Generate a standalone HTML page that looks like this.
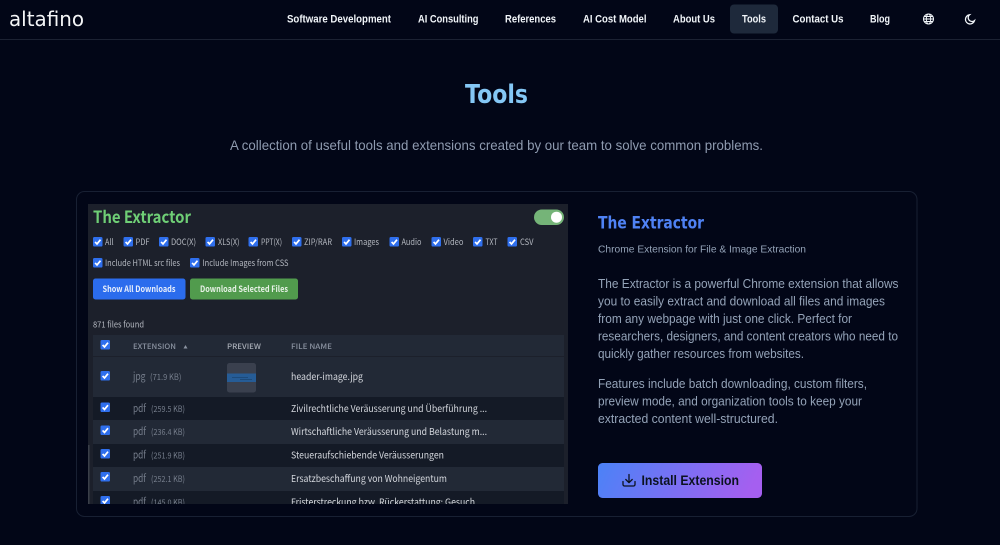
<!DOCTYPE html>
<html lang="en"><head><meta charset="utf-8"><title>Tools - altafino</title>
<style>
html,body{margin:0;padding:0;background:#020617;width:1000px;height:545px;overflow:hidden}
svg{display:block;filter:blur(.25px)}
.s{font-family:"Liberation Sans",sans-serif}
.d{font-family:"DejaVu Sans",sans-serif}
.n{font-family:"Noto Sans CJK JP","Liberation Sans",sans-serif}
.nav{font-size:11px;font-weight:700;fill:#f1f5f9}
.p{font-size:12.5px;fill:#94a3b8}
.c{font-size:8.5px;fill:#b4b8c0}
.h{font-size:7.5px;fill:#8b93a1;font-weight:500}
.e{font-size:10.5px;fill:#767e8c}
.z{font-size:8.5px;fill:#767e8c}
.f{font-size:9.5px;fill:#d5d8de}
</style></head><body>
<svg width="1000" height="545" viewBox="0 0 1000 545" xmlns="http://www.w3.org/2000/svg">
<defs>
<linearGradient id="g" x1="0" y1="0" x2="1" y2="0.1"><stop offset="0" stop-color="#4b82f7"/><stop offset="1" stop-color="#a55ff0"/></linearGradient>
<clipPath id="clip"><rect x="88" y="204" width="480" height="300"/></clipPath>
<symbol id="cb" viewBox="0 0 10 10"><rect width="10" height="10" rx="1.5" fill="#2f6fed"/><path d="M2.200 5.200L4.200 7.300L7.900 2.800" fill="none" stroke="#fff" stroke-width="1.800"/></symbol>
</defs>
<rect width="1000" height="545" fill="#020617"/>
<rect x="0" y="39" width="1000" height="1" fill="#1c2233"/>

<text class="d" x="9" y="26" font-size="20" fill="#f4f5f7" textLength="75" lengthAdjust="spacingAndGlyphs">altafino</text>
<rect x="730" y="4.500" width="48" height="29" rx="4" fill="#1e293b"/>
<g class="s nav">
<text x="287" y="22.500" textLength="104" lengthAdjust="spacingAndGlyphs">Software Development</text>
<text x="418" y="22.500" textLength="60.500" lengthAdjust="spacingAndGlyphs">AI Consulting</text>
<text x="505" y="22.500" textLength="51" lengthAdjust="spacingAndGlyphs">References</text>
<text x="583" y="22.500" textLength="63.500" lengthAdjust="spacingAndGlyphs">AI Cost Model</text>
<text x="673" y="22.500" textLength="42" lengthAdjust="spacingAndGlyphs">About Us</text>
<text x="742" y="22.500" textLength="24" lengthAdjust="spacingAndGlyphs">Tools</text>
<text x="792.500" y="22.500" textLength="51" lengthAdjust="spacingAndGlyphs">Contact Us</text>
<text x="870" y="22.500" textLength="20" lengthAdjust="spacingAndGlyphs">Blog</text>
</g>
<g fill="none" stroke="#f1f5f9" stroke-width="1">
<circle cx="928.500" cy="19" r="5"/><ellipse cx="928.500" cy="19" rx="2.200" ry="5"/><path d="M923.500 19h10M924.300 16.500h8.400M924.300 21.500h8.400"/>
<path d="M969.500 14.800a4.600 4.600 0 1 0 5 5.800a3.800 3.800 0 0 1-5-5.800z" stroke-width="1.300"/>
</g>

<text class="d" x="465" y="103" font-size="26" font-weight="700" fill="#84c7f5" textLength="63" lengthAdjust="spacingAndGlyphs">Tools</text>
<text class="s" x="230" y="150" font-size="14" fill="#8f9bb0" textLength="533" lengthAdjust="spacingAndGlyphs">A collection of useful tools and extensions created by our team to solve common problems.</text>

<rect x="76.500" y="191.500" width="840.500" height="325" rx="8" fill="#020617" stroke="#182033"/>

<g clip-path="url(#clip)">
<rect x="88" y="204" width="480" height="300" fill="#1c202b"/>
<rect x="88" y="445" width="1.500" height="59" fill="#3a3f49"/>
<text class="n" x="93" y="223" font-size="16.500" font-weight="700" fill="#6fcf76" textLength="98" lengthAdjust="spacingAndGlyphs">The Extractor</text>
<rect x="534" y="209.500" width="30" height="15.500" rx="7.750" fill="#75b478"/>
<circle cx="556.500" cy="217.200" r="5.500" fill="#fff"/>

<use href="#cb" x="93" y="237" width="9.500" height="9.500"/><text class="n c" x="105" y="245" textLength="8.500" lengthAdjust="spacingAndGlyphs">All</text>
<use href="#cb" x="123.500" y="237" width="9.500" height="9.500"/><text class="n c" x="135.500" y="245" textLength="14" lengthAdjust="spacingAndGlyphs">PDF</text>
<use href="#cb" x="159" y="237" width="9.500" height="9.500"/><text class="n c" x="171" y="245" textLength="25" lengthAdjust="spacingAndGlyphs">DOC(X)</text>
<use href="#cb" x="205.500" y="237" width="9.500" height="9.500"/><text class="n c" x="218" y="245" textLength="21.500" lengthAdjust="spacingAndGlyphs">XLS(X)</text>
<use href="#cb" x="248.500" y="237" width="9.500" height="9.500"/><text class="n c" x="261" y="245" textLength="21" lengthAdjust="spacingAndGlyphs">PPT(X)</text>
<use href="#cb" x="292" y="237" width="9.500" height="9.500"/><text class="n c" x="304" y="245" textLength="28" lengthAdjust="spacingAndGlyphs">ZIP/RAR</text>
<use href="#cb" x="342" y="237" width="9.500" height="9.500"/><text class="n c" x="354" y="245" textLength="25" lengthAdjust="spacingAndGlyphs">Images</text>
<use href="#cb" x="389.500" y="237" width="9.500" height="9.500"/><text class="n c" x="401.500" y="245" textLength="20" lengthAdjust="spacingAndGlyphs">Audio</text>
<use href="#cb" x="431.500" y="237" width="9.500" height="9.500"/><text class="n c" x="443.500" y="245" textLength="20" lengthAdjust="spacingAndGlyphs">Video</text>
<use href="#cb" x="473" y="237" width="9.500" height="9.500"/><text class="n c" x="485.500" y="245" textLength="12" lengthAdjust="spacingAndGlyphs">TXT</text>
<use href="#cb" x="507.500" y="237" width="9.500" height="9.500"/><text class="n c" x="520" y="245" textLength="13.500" lengthAdjust="spacingAndGlyphs">CSV</text>

<use href="#cb" x="93" y="258" width="9.500" height="9.500"/><text class="n c" x="105" y="266" textLength="75" lengthAdjust="spacingAndGlyphs">Include HTML src files</text>
<use href="#cb" x="190" y="258" width="9.500" height="9.500"/><text class="n c" x="202.500" y="266" textLength="86" lengthAdjust="spacingAndGlyphs">Include Images from CSS</text>

<rect x="93" y="278.500" width="92.500" height="21" rx="2.500" fill="#2b6ced"/>
<text class="n" x="102.500" y="292" font-size="8.500" font-weight="700" fill="#e8effc" textLength="73" lengthAdjust="spacingAndGlyphs">Show All Downloads</text>
<rect x="190" y="278.500" width="108" height="21" rx="2.500" fill="#519b4d"/>
<text class="n" x="200" y="292" font-size="8.500" font-weight="700" fill="#e8f2e7" textLength="88" lengthAdjust="spacingAndGlyphs">Download Selected Files</text>

<text class="n" x="93" y="327.500" font-size="8.500" fill="#b4b8c0" textLength="51" lengthAdjust="spacingAndGlyphs">871 files found</text>

<rect x="93" y="335" width="471" height="21" fill="#222936"/>
<use href="#cb" x="100.500" y="340" width="9.500" height="9.500"/>
<text class="n h" x="133" y="349" textLength="43" lengthAdjust="spacingAndGlyphs">EXTENSION</text>
<path d="M183.500 348.500h4l-2-3.500z" fill="#8b93a1"/>
<text class="n h" x="227" y="349" font-weight="700" style="fill:#a8adb6" textLength="34" lengthAdjust="spacingAndGlyphs">PREVIEW</text>
<text class="n h" x="291" y="349" textLength="41" lengthAdjust="spacingAndGlyphs">FILE NAME</text>

<rect x="93" y="357" width="471" height="40" fill="#222936"/>
<use href="#cb" x="100.500" y="371" width="9.500" height="9.500"/>
<text class="n e" x="133" y="380" textLength="12.500" lengthAdjust="spacingAndGlyphs">jpg</text>
<text class="n z" x="150" y="380" textLength="31.500" lengthAdjust="spacingAndGlyphs">(71.9 KB)</text>
<rect x="227" y="363" width="29" height="29.500" rx="2.500" fill="#3a404e"/>
<rect x="227" y="373.500" width="29" height="8.500" fill="#265c96"/>
<path d="M232 377.500h16M240 379.500h12" stroke="#1d4a7a" stroke-width="1"/>
<text class="n f" x="291" y="380" textLength="72" lengthAdjust="spacingAndGlyphs">header-image.jpg</text>

<rect x="93" y="397" width="471" height="23" fill="#141a26"/>
<use href="#cb" x="100.500" y="402.500" width="9.500" height="9.500"/>
<text class="n e" x="133" y="412" textLength="13" lengthAdjust="spacingAndGlyphs">pdf</text>
<text class="n z" x="151" y="412" textLength="34" lengthAdjust="spacingAndGlyphs">(259.5 KB)</text>
<text class="n f" x="291" y="412" textLength="196" lengthAdjust="spacingAndGlyphs">Zivilrechtliche Veräusserung und Überführung ...</text>

<rect x="93" y="420" width="471" height="24" fill="#222936"/>
<use href="#cb" x="100.500" y="425.500" width="9.500" height="9.500"/>
<text class="n e" x="133" y="435" textLength="13" lengthAdjust="spacingAndGlyphs">pdf</text>
<text class="n z" x="151" y="435" textLength="34" lengthAdjust="spacingAndGlyphs">(236.4 KB)</text>
<text class="n f" x="291" y="435" textLength="196" lengthAdjust="spacingAndGlyphs">Wirtschaftliche Veräusserung und Belastung m...</text>

<rect x="93" y="444" width="471" height="23" fill="#141a26"/>
<use href="#cb" x="100.500" y="449" width="9.500" height="9.500"/>
<text class="n e" x="133" y="458.500" textLength="13" lengthAdjust="spacingAndGlyphs">pdf</text>
<text class="n z" x="151" y="458.500" textLength="34" lengthAdjust="spacingAndGlyphs">(251.9 KB)</text>
<text class="n f" x="291" y="458.500" textLength="153" lengthAdjust="spacingAndGlyphs">Steueraufschiebende Veräusserungen</text>

<rect x="93" y="467" width="471" height="24" fill="#222936"/>
<use href="#cb" x="100.500" y="472" width="9.500" height="9.500"/>
<text class="n e" x="133" y="482" textLength="13" lengthAdjust="spacingAndGlyphs">pdf</text>
<text class="n z" x="151" y="482" textLength="34" lengthAdjust="spacingAndGlyphs">(252.1 KB)</text>
<text class="n f" x="291" y="482" textLength="156" lengthAdjust="spacingAndGlyphs">Ersatzbeschaffung von Wohneigentum</text>

<rect x="93" y="491" width="471" height="13" fill="#141a26"/>
<use href="#cb" x="100.500" y="496" width="9.500" height="9.500"/>
<text class="n e" x="133" y="505.500" textLength="13" lengthAdjust="spacingAndGlyphs">pdf</text>
<text class="n z" x="151" y="505.500" textLength="34" lengthAdjust="spacingAndGlyphs">(145.0 KB)</text>
<text class="n f" x="291" y="505.500" textLength="184" lengthAdjust="spacingAndGlyphs">Fristerstreckung bzw. Rückerstattung: Gesuch</text>
</g>

<text class="d" x="598" y="228.500" font-size="16.500" font-weight="700" fill="#4f82f4" textLength="106" lengthAdjust="spacingAndGlyphs">The Extractor</text>
<text class="s" x="598" y="252.500" font-size="10.500" fill="#94a3b8" textLength="208" lengthAdjust="spacingAndGlyphs">Chrome Extension for File &amp; Image Extraction</text>
<g class="s p">
<text x="598" y="288" textLength="300.500" lengthAdjust="spacingAndGlyphs">The Extractor is a powerful Chrome extension that allows</text>
<text x="598" y="305.500" textLength="287" lengthAdjust="spacingAndGlyphs">you to easily extract and download all files and images</text>
<text x="598" y="323" textLength="254" lengthAdjust="spacingAndGlyphs">from any webpage with just one click. Perfect for</text>
<text x="598" y="340.500" textLength="300" lengthAdjust="spacingAndGlyphs">researchers, designers, and content creators who need to</text>
<text x="598" y="358" textLength="206" lengthAdjust="spacingAndGlyphs">quickly gather resources from websites.</text>
<text x="598" y="388" textLength="269" lengthAdjust="spacingAndGlyphs">Features include batch downloading, custom filters,</text>
<text x="598" y="405.500" textLength="264" lengthAdjust="spacingAndGlyphs">preview mode, and organization tools to keep your</text>
<text x="598" y="423" textLength="180" lengthAdjust="spacingAndGlyphs">extracted content well-structured.</text>
</g>

<rect x="598" y="463" width="164" height="35" rx="4.500" fill="url(#g)"/>
<g fill="none" stroke="#0b1220" stroke-width="1.300" stroke-linecap="round" stroke-linejoin="round">
<path d="M629 474.500v8M625.800 479.500l3.200 3.200l3.200-3.200M623 481.500v3a1.500 1.500 0 0 0 1.500 1.500h9a1.500 1.500 0 0 0 1.500-1.500v-3"/>
</g>
<text class="s" x="641.500" y="485" font-size="14" font-weight="700" fill="#0b1220" textLength="97.500" lengthAdjust="spacingAndGlyphs">Install Extension</text>
</svg>
</body></html>
